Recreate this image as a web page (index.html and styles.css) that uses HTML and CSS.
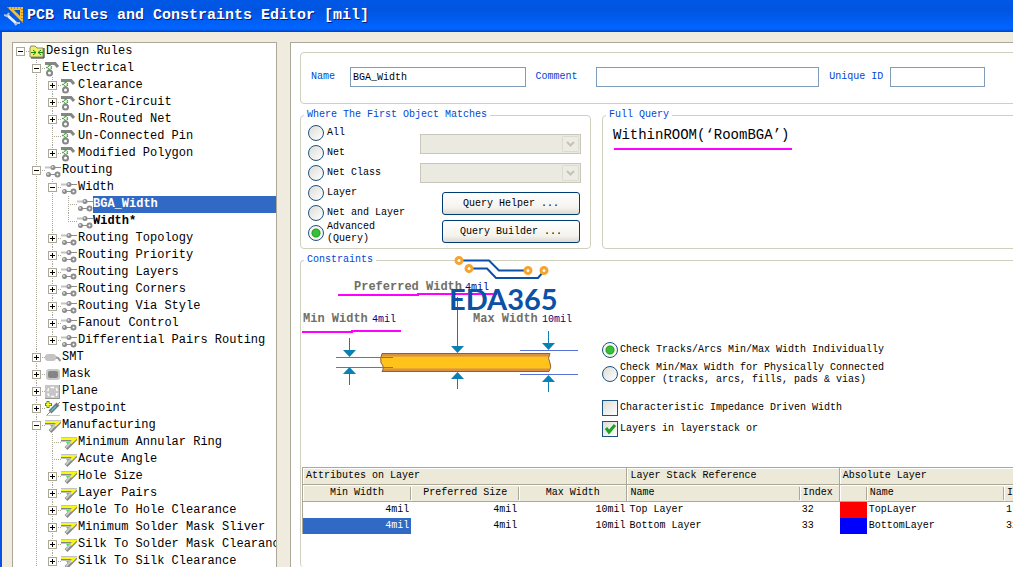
FILE: index.html
```html
<!DOCTYPE html>
<html lang="en">
<head>
    <meta charset="UTF-8">
    <meta name="viewport" content="width=device-width, initial-scale=1.0">
    <title>PCB Rules and Constraints Editor [mil]</title>
    <link rel="stylesheet" href="styles.css">
</head>
<body>

<!-- Icons shared by the tree rows -->
<svg class="sprite" aria-hidden="true">
    <symbol id="folder" viewBox="0 0 16 17">
        <path d="M1 5 L2 3 H6 L8 5 H14 V14 H1 Z" fill="#eef06a" stroke="#8a8a70"/>
        <path d="M2 15 H15 V5" fill="none" stroke="#222" stroke-width="1"/>
        <path d="M2 9.500 H7 M9 9.500 H14 M4 7 L7 9.500 L4 12 M12 7 L9 9.500 L12 12" fill="none" stroke="#138a13"/>
    </symbol>
    <symbol id="electrical" viewBox="0 0 16 17">
        <path d="M0 3.500 H10 L13 7" fill="none" stroke="#868686" stroke-width="3"/>
        <path d="M4.500 5 L7 7.500 L4.500 10 L2 7.500 Z" fill="none" stroke="#2f9a2f" stroke-width="1.500" stroke-dasharray="1.200 .8"/>
        <circle cx="4.500" cy="13" r="2.500" fill="#fff" stroke="#868686" stroke-width="2"/>
    </symbol>
    <symbol id="routing" viewBox="0 0 16 17">
        <path d="M0 5.500 H8" stroke="#c4c4c4" stroke-width="2"/>
        <path d="M8 5.500 H16 M3 12.500 H12" stroke="#8c8c8c"/>
        <circle cx="8" cy="5.500" r="2.500" fill="#8c8c8c"/>
        <circle cx="7.500" cy="5" r="1" fill="#ddd"/>
        <circle cx="3.500" cy="12.500" r="2.500" fill="#8c8c8c"/>
        <circle cx="3" cy="12" r="1" fill="#ddd"/>
        <circle cx="12.500" cy="12.500" r="2" fill="#fff" stroke="#8c8c8c" stroke-width="2"/>
    </symbol>
    <symbol id="smt" viewBox="0 0 16 17">
        <path d="M9 8 L13 9 L15.500 12" fill="none" stroke="#999" stroke-width="2"/>
        <rect x="0" y="5" width="11" height="7" rx="3" fill="#c4c4c4"/>
    </symbol>
    <symbol id="mask" viewBox="0 0 16 17">
        <rect x="1" y="3" width="14" height="11" rx="3" fill="#c8c8c8"/>
        <rect x="3" y="5" width="10" height="7" rx="2" fill="#858585"/>
    </symbol>
    <symbol id="plane" viewBox="0 0 16 17">
        <rect x="0" y="2" width="15" height="14" fill="#c6c6c6"/>
        <path d="M0 15.500 H14.500 V2" fill="none" stroke="#999"/>
        <rect x="3" y="4.500" width="9" height="9" rx="3" fill="none" stroke="#fff" stroke-width="1.500" stroke-dasharray="3 2"/>
    </symbol>
    <symbol id="testpoint" viewBox="0 0 16 17">
        <path d="M3 1 V8 M0 4.500 H7" stroke="#3a9a1a" stroke-width="3"/>
        <path d="M3 2 V7 M1 4.500 H6" stroke="#ffff30" stroke-width="1.500"/>
        <path d="M2 15 L5 12 M12 5 L15 2" stroke="#888"/>
        <path d="M5 12 L13 4" stroke="#777" stroke-width="4"/>
        <path d="M6 11 L11 6" stroke="#35d0d0" stroke-width="1.500"/>
        <path d="M1 15.500 H15" stroke="#c8c8c8"/>
    </symbol>
    <symbol id="mfg" viewBox="0 0 16 17">
        <path d="M0 5.500 H14 L5 14.500" fill="none" stroke="#868686" stroke-width="4"/>
        <path d="M5 8 H9 L7 11 Z" fill="#55dd55"/>
        <path d="M1 5 H13 L5 13.500" fill="none" stroke="#c8c8c8" stroke-width="2"/>
        <path d="M0 5 H14 L10 9" fill="none" stroke="#f8f812" stroke-width="2"/>
    </symbol>
</svg>

<header class="titlebar">
    <svg class="app-icon" viewBox="0 0 20 20" aria-hidden="true">
        <path d="M3 1 H19 V17 Z M10 4 L16 10 V4 Z" fill="#f7bd2b" fill-rule="evenodd"/>
        <path d="M4 2 H18 V16" fill="none" stroke="#8a5a10" stroke-dasharray="1 2"/>
        <path d="M3 9 L13 18" stroke="#e8edf5" stroke-width="3"/>
        <path d="M0 9 L3 10 L5 7 M11 19 L13 17 L16 17" fill="none" stroke="#b9c2cf" stroke-width="2"/>
    </svg>
    <h1>PCB Rules and Constraints Editor [mil]</h1>
</header>

<main class="window">
    <nav class="tree" aria-label="Design rules">
        <ul>
            <li>
                <div class="row"><span class="twig"><button class="minus" aria-label="Collapse"></button></span><svg><use href="#folder"/></svg><span class="label">Design Rules</span></div>
                <ul>
                    <li>
                        <div class="row"><span class="twig"><button class="minus" aria-label="Collapse"></button></span><svg><use href="#electrical"/></svg><span class="label">Electrical</span></div>
                        <ul>
                            <li><div class="row"><span class="twig"><button class="plus" aria-label="Expand"></button></span><svg><use href="#electrical"/></svg><span class="label">Clearance</span></div></li>
                            <li><div class="row"><span class="twig"><button class="plus" aria-label="Expand"></button></span><svg><use href="#electrical"/></svg><span class="label">Short-Circuit</span></div></li>
                            <li><div class="row"><span class="twig"><button class="plus" aria-label="Expand"></button></span><svg><use href="#electrical"/></svg><span class="label">Un-Routed Net</span></div></li>
                            <li><div class="row"><span class="twig"></span><svg><use href="#electrical"/></svg><span class="label">Un-Connected Pin</span></div></li>
                            <li><div class="row"><span class="twig"><button class="plus" aria-label="Expand"></button></span><svg><use href="#electrical"/></svg><span class="label">Modified Polygon</span></div></li>
                        </ul>
                    </li>
                    <li>
                        <div class="row"><span class="twig"><button class="minus" aria-label="Collapse"></button></span><svg><use href="#routing"/></svg><span class="label">Routing</span></div>
                        <ul>
                            <li>
                                <div class="row"><span class="twig"><button class="minus" aria-label="Collapse"></button></span><svg><use href="#routing"/></svg><span class="label">Width</span></div>
                                <ul>
                                    <li><div class="row"><span class="twig"></span><svg><use href="#routing"/></svg><span class="label rule selected">BGA_Width</span></div></li>
                                    <li><div class="row"><span class="twig"></span><svg><use href="#routing"/></svg><span class="label rule">Width*</span></div></li>
                                </ul>
                            </li>
                            <li><div class="row"><span class="twig"><button class="plus" aria-label="Expand"></button></span><svg><use href="#routing"/></svg><span class="label">Routing Topology</span></div></li>
                            <li><div class="row"><span class="twig"><button class="plus" aria-label="Expand"></button></span><svg><use href="#routing"/></svg><span class="label">Routing Priority</span></div></li>
                            <li><div class="row"><span class="twig"><button class="plus" aria-label="Expand"></button></span><svg><use href="#routing"/></svg><span class="label">Routing Layers</span></div></li>
                            <li><div class="row"><span class="twig"><button class="plus" aria-label="Expand"></button></span><svg><use href="#routing"/></svg><span class="label">Routing Corners</span></div></li>
                            <li><div class="row"><span class="twig"><button class="plus" aria-label="Expand"></button></span><svg><use href="#routing"/></svg><span class="label">Routing Via Style</span></div></li>
                            <li><div class="row"><span class="twig"><button class="plus" aria-label="Expand"></button></span><svg><use href="#routing"/></svg><span class="label">Fanout Control</span></div></li>
                            <li><div class="row"><span class="twig"><button class="plus" aria-label="Expand"></button></span><svg><use href="#routing"/></svg><span class="label">Differential Pairs Routing</span></div></li>
                        </ul>
                    </li>
                    <li><div class="row"><span class="twig"><button class="plus" aria-label="Expand"></button></span><svg><use href="#smt"/></svg><span class="label">SMT</span></div></li>
                    <li><div class="row"><span class="twig"><button class="plus" aria-label="Expand"></button></span><svg><use href="#mask"/></svg><span class="label">Mask</span></div></li>
                    <li><div class="row"><span class="twig"><button class="plus" aria-label="Expand"></button></span><svg><use href="#plane"/></svg><span class="label">Plane</span></div></li>
                    <li><div class="row"><span class="twig"><button class="plus" aria-label="Expand"></button></span><svg><use href="#testpoint"/></svg><span class="label">Testpoint</span></div></li>
                    <li class="more">
                        <div class="row"><span class="twig"><button class="minus" aria-label="Collapse"></button></span><svg><use href="#mfg"/></svg><span class="label">Manufacturing</span></div>
                        <ul>
                            <li><div class="row"><span class="twig"></span><svg><use href="#mfg"/></svg><span class="label">Minimum Annular Ring</span></div></li>
                            <li><div class="row"><span class="twig"></span><svg><use href="#mfg"/></svg><span class="label">Acute Angle</span></div></li>
                            <li><div class="row"><span class="twig"><button class="plus" aria-label="Expand"></button></span><svg><use href="#mfg"/></svg><span class="label">Hole Size</span></div></li>
                            <li><div class="row"><span class="twig"><button class="plus" aria-label="Expand"></button></span><svg><use href="#mfg"/></svg><span class="label">Layer Pairs</span></div></li>
                            <li><div class="row"><span class="twig"><button class="plus" aria-label="Expand"></button></span><svg><use href="#mfg"/></svg><span class="label">Hole To Hole Clearance</span></div></li>
                            <li><div class="row"><span class="twig"><button class="plus" aria-label="Expand"></button></span><svg><use href="#mfg"/></svg><span class="label">Minimum Solder Mask Sliver</span></div></li>
                            <li><div class="row"><span class="twig"><button class="plus" aria-label="Expand"></button></span><svg><use href="#mfg"/></svg><span class="label">Silk To Solder Mask Clearance</span></div></li>
                            <li><div class="row"><span class="twig"><button class="plus" aria-label="Expand"></button></span><svg><use href="#mfg"/></svg><span class="label">Silk To Silk Clearance</span></div></li>
                        </ul>
                    </li>
                </ul>
            </li>
        </ul>
    </nav>

    <section class="editor">
        <div class="group identity">
            <label for="ruleName">Name</label>
            <input type="text" id="ruleName" class="name" value="BGA_Width">
            <label for="comment">Comment</label>
            <input type="text" id="comment" class="comment">
            <label for="uniqueId">Unique ID</label>
            <input type="text" id="uniqueId" class="uid">
        </div>

        <div class="scope">
            <fieldset class="group matches">
                <legend>Where The First Object Matches</legend>
                <div class="matches-body">
                    <div class="choices">
                        <label><input type="radio" name="match">All</label>
                        <label><input type="radio" name="match">Net</label>
                        <label><input type="radio" name="match">Net Class</label>
                        <label><input type="radio" name="match">Layer</label>
                        <label><input type="radio" name="match">Net and Layer</label>
                        <label><input type="radio" name="match" checked>Advanced (Query)</label>
                    </div>
                    <div class="pickers">
                        <select disabled aria-label="Net"></select>
                        <select disabled aria-label="Layer"></select>
                        <button type="button">Query Helper ...</button>
                        <button type="button">Query Builder ...</button>
                    </div>
                </div>
            </fieldset>

            <fieldset class="group query">
                <legend>Full Query</legend>
                <textarea aria-label="Full Query" rows="1" spellcheck="false">WithinROOM(‘RoomBGA’)</textarea>
                <div class="marker"></div>
            </fieldset>
        </div>

        <fieldset class="group constraints">
            <legend>Constraints</legend>
            <div class="constraints-body">
                <div class="diagram">
                    <svg class="drawing" viewBox="0 0 300 190">
                        <text class="caption" x="53" y="24">Preferred Width</text>
                        <text class="value" x="164" y="24">4mil</text>
                        <text class="caption" x="2" y="56">Min Width</text>
                        <text class="value" x="71" y="56">4mil</text>
                        <text class="caption" x="172" y="56">Max Width</text>
                        <text class="value" x="241" y="56">10mil</text>
                        <path class="mark" d="M37 29 H117 V28 H196 M1 66 H51 V65 H100"/>
                        <!-- copper track -->
                        <path d="M81 87.500 H249 Q246 92 249 97 Q251 101 248 105.500 H81 Q84 101 80 97 Q79 92 81 87.500 Z" fill="#ffc31b"/>
                        <path d="M81 89 H248 M82 104 H248" stroke="#d99048" stroke-width="3"/>
                        <path d="M81 87.500 H249 Q246 92 249 97 Q251 101 248 105.500 H81 Q84 101 80 97 Q79 92 81 87.500 Z" fill="none" stroke="#8f5f35"/>
                        <path class="limit" d="M35 91.500 H92 M35 101.500 H92 M219 84.500 H277 M219 108.500 H277"/>
                        <path class="stem" d="M48.500 72 V88 M48.500 104 V119 M156.500 31 V84 M156.500 109 V123 M247.500 65 V81 M247.500 112 V126"/>
                        <path class="head" d="M42 84 H55 L48.500 91 Z M42 108 H55 L48.500 101 Z M150 80 H163 L156.500 87 Z M150 113 H163 L156.500 106 Z M241 77 H254 L247.500 84 Z M241 116 H254 L247.500 109 Z"/>
                    </svg>
                    <svg class="logo" viewBox="0 0 114 60">
                        <path d="M10 6.500 H40 L50 16.500 H79 M20 14.500 H38 L47 24 H89 L95 17" fill="none" stroke="#0b51a5" stroke-width="2"/>
                        <g fill="#fff" stroke="#f5a431" stroke-width="3">
                            <circle cx="10" cy="6.500" r="3"/>
                            <circle cx="20" cy="14.500" r="3"/>
                            <circle cx="79" cy="16.500" r="3"/>
                            <circle cx="95" cy="16.500" r="3"/>
                        </g>
                        <text x="0" y="56">EDA365</text>
                    </svg>
                </div>
                <div class="options">
                    <label><input type="radio" name="check" checked>Check Tracks/Arcs Min/Max Width Individually</label>
                    <label><input type="radio" name="check"><span>Check Min/Max Width for Physically Connected<br>Copper (tracks, arcs, fills, pads &amp; vias)</span></label>
                    <label class="box"><input type="checkbox">Characteristic Impedance Driven Width</label>
                    <label class="box"><input type="checkbox" checked>Layers in layerstack or</label>
                </div>
            </div>

            <table class="layers">
                <colgroup>
                    <col class="w-attr"><col class="w-attr"><col class="w-attr">
                    <col class="w-name"><col class="w-index">
                    <col class="w-color"><col class="w-abs"><col class="w-index">
                </colgroup>
                <thead>
                    <tr class="bands">
                        <th colspan="3">Attributes on Layer</th>
                        <th colspan="2">Layer Stack Reference</th>
                        <th colspan="3">Absolute Layer</th>
                    </tr>
                    <tr class="heads">
                        <th class="mid">Min Width</th>
                        <th class="mid">Preferred Size</th>
                        <th class="mid end">Max Width</th>
                        <th>Name</th>
                        <th class="end">Index</th>
                        <th></th>
                        <th>Name</th>
                        <th>Index</th>
                    </tr>
                </thead>
                <tbody>
                    <tr>
                        <td class="num">4mil</td><td class="num">4mil</td><td class="num">10mil</td>
                        <td>Top Layer</td><td>32</td>
                        <td class="red"></td><td>TopLayer</td><td>1</td>
                    </tr>
                    <tr>
                        <td class="num active">4mil</td><td class="num">4mil</td><td class="num">10mil</td>
                        <td>Bottom Layer</td><td>33</td>
                        <td class="blue"></td><td>BottomLayer</td><td>32</td>
                    </tr>
                </tbody>
            </table>
        </fieldset>
    </section>
</main>

</body>
</html>
```
FILE: styles.css
```css
* {
    box-sizing: border-box;
}

body {
    margin: 0;
    height: 100vh;
    display: flex;
    flex-direction: column;
    overflow: hidden;
    font-family: "Liberation Mono", monospace;
    font-size: 10px;
    line-height: 12px;
    color: #000;
    background: #efebde;
}

input, button, select, textarea {
    font: inherit;
    color: inherit;
    margin: 0;
}

.sprite {
    display: none;
}

/* Title bar */
.titlebar {
    flex: none;
    display: flex;
    align-items: center;
    gap: 3px;
    height: 32px;
    padding: 0 4px;
    background: linear-gradient(to bottom, #0058e6 0%, #0055e0 30%, #0061fa 75%, #0066ff 90%, #0040c8 100%);
}

.titlebar h1 {
    margin: 0;
    font-size: 15px;
    line-height: 20px;
    color: #fff;
    text-shadow: 1px 1px 0 #0a1883;
    white-space: nowrap;
}

.app-icon {
    width: 20px;
    height: 20px;
}

.window {
    flex: 1;
    min-height: 0;
    display: flex;
    gap: 13px;
    padding: 10px 0 0 10px;
    border-left: 2px solid #0a50e6;
}

/* Rule tree */
.tree {
    flex: none;
    width: 265px;
    overflow: hidden;
    background: #fff;
    border: 1px solid #aca899;
    border-bottom: none;
    font-size: 12px;
}

.tree ul {
    list-style: none;
    margin: 0;
    padding: 0;
}

.tree ul ul {
    padding-left: 16px;
}

.tree ul ul > li {
    background: repeating-linear-gradient(#aca899 0 1px, transparent 1px 2px) 7px 0 / 1px 100% no-repeat;
}

.tree ul ul > li:last-child {
    background-size: 1px 9px;
}

.tree ul ul > li.more {
    background-size: 1px 100%;
}

.row {
    display: flex;
    height: 17px;
    line-height: 17px;
    white-space: nowrap;
}

.row svg {
    flex: none;
    width: 16px;
    height: 17px;
}

.twig {
    flex: none;
    width: 16px;
    padding: 4px 0 0 3px;
    background: repeating-linear-gradient(to right, #aca899 0 1px, transparent 1px 2px) 7px 8px / 9px 1px no-repeat;
}

.twig button {
    display: block;
    width: 9px;
    height: 9px;
    padding: 0;
    border: 1px solid #aca899;
    background: linear-gradient(#000, #000) center / 5px 1px no-repeat, #fff;
}

.twig .plus {
    background: linear-gradient(#000, #000) center / 5px 1px no-repeat, linear-gradient(#000, #000) center / 1px 5px no-repeat, #fff;
}

.label {
    flex: 1;
    padding-left: 1px;
}

.rule {
    padding-left: 0;
    font-weight: bold;
}

.selected {
    color: #fff;
    background: #316ac5;
}

/* Rule editor */
.editor {
    flex: 1;
    min-width: 0;
    overflow: hidden;
    display: flex;
    flex-direction: column;
    padding: 9px 0 0 9px;
    background: #fff;
    border: solid #aca899;
    border-width: 1px 0 0 1px;
}

.group {
    min-width: 0;
    margin: 0;
    padding: 0;
    border: 1px solid #d0d0bf;
    border-radius: 4px;
}

legend {
    margin-left: 3px;
    padding: 0 3px;
    color: #0046d5;
}

/* The form runs on past the right edge of the window */
.identity, .query, .constraints {
    margin-right: -8px;
}

.identity {
    display: flex;
    align-items: center;
    height: 52px;
    padding: 0 35px 2px 10px;
    color: #0046d5;
    white-space: nowrap;
}

.identity input {
    height: 20px;
    padding: 0 2px;
    border: 1px solid #7f9db9;
    background: #fff;
    color: #000;
}

.identity label {
    margin-right: 15px;
}

.identity label[for="comment"] {
    margin-right: 18px;
}

.identity label[for="uniqueId"] {
    margin-right: 7px;
}

.identity input + label {
    margin-left: 10px;
}

.name {
    flex: 176 1 0;
    min-width: 0;
}

.comment {
    flex: 226 1 0;
    min-width: 0;
}

.uid {
    flex: 92 1 0;
    min-width: 0;
}

.scope {
    display: flex;
    gap: 11px;
    margin-top: 5px;
}

.matches {
    flex: none;
    width: 291px;
}

.matches-body {
    display: flex;
    justify-content: space-between;
    padding: 8px 9px 5px 7px;
    margin-top: -6px;
}

.choices label {
    display: flex;
    align-items: center;
    gap: 3px;
    height: 20px;
}

.pickers {
    display: flex;
    flex-direction: column;
    align-items: flex-end;
    padding-top: 11px;
}

.pickers select {
    width: 161px;
    height: 20px;
    margin-bottom: 9px;
    border: 1px solid #c9c7ba;
    border-radius: 0;
    appearance: none;
    opacity: 1;
    background:
        url("data:image/svg+xml,%3Csvg xmlns='http://www.w3.org/2000/svg' width='17' height='16'%3E%3Crect x='.5' y='.5' width='16' height='15' rx='1' fill='%23ecebe4' stroke='%23dcdbd0'/%3E%3Cpath d='M5 6l3.500 3.500L12 6' fill='none' stroke='%23c4c3b8' stroke-width='2'/%3E%3C/svg%3E") right 1px center no-repeat,
        #ebeae1;
}

.pickers button {
    width: 138px;
    height: 23px;
    margin: 0 1px 5px 0;
    padding: 0;
    border: 1px solid #003c74;
    border-radius: 3px;
    background: linear-gradient(#fff, #f4f3ee 70%, #dcd9cf);
}

.pickers button:last-child {
    margin-bottom: 0;
}

/* Radios and tick boxes */
input[type="radio"], input[type="checkbox"] {
    appearance: none;
    flex: none;
    width: 16px;
    height: 16px;
    border: 1px solid #1c5180;
    background: linear-gradient(135deg, #dcdcd7, #fff);
}

input[type="radio"] {
    border-radius: 50%;
}

input[type="radio"]:checked {
    background: radial-gradient(circle, #35c035 0 3px, #22a022 4px, #f6f6f4 5px);
}

input[type="checkbox"]:checked {
    background: url("data:image/svg+xml,%3Csvg xmlns='http://www.w3.org/2000/svg' width='14' height='14'%3E%3Cpath d='M3 6l3 4 6-7' fill='none' stroke='%2321a121' stroke-width='3'/%3E%3C/svg%3E") center no-repeat, linear-gradient(135deg, #dcdcd7, #fff);
}

.query {
    flex: 1;
}

.query textarea {
    display: block;
    width: 100%;
    height: 20px;
    padding: 0 10px;
    border: none;
    outline: none;
    resize: none;
    overflow: hidden;
    background: none;
    font-size: 14px;
    line-height: 20px;
    margin-top: 4px;
}

.marker {
    width: 178px;
    height: 2px;
    margin: 3px 0 0 11px;
    background: #f0f;
}

/* Constraints */
.constraints {
    flex: 1;
    margin-top: 5px;
    border-bottom: none;
}

.constraints-body {
    display: flex;
    height: 201px;
    gap: 1px;
}

.diagram {
    flex: none;
    position: relative;
    width: 300px;
}

.drawing {
    display: block;
    width: 300px;
    height: 190px;
}

.caption {
    font-size: 12px;
    font-weight: bold;
    fill: #716f64;
}

.value {
    font-size: 10px;
    fill: #000080;
}

.mark {
    fill: none;
    stroke: #f0f;
    stroke-width: 2;
}

.limit {
    stroke: #5a72d8;
}

.stem {
    stroke: #0a80b5;
}

.head {
    fill: #0a80b5;
}

/* Logo lies over the group border and the diagram */
.logo {
    position: absolute;
    left: 148px;
    top: -12px;
    width: 114px;
    height: 60px;
}

.logo text {
    font-family: Lato, sans-serif;
    font-size: 29px;
    font-weight: bold;
    fill: #0b51a5;
}

.options {
    padding-top: 76px;
}

.options label {
    display: flex;
    align-items: center;
    gap: 2px;
    margin-bottom: 4px;
    white-space: nowrap;
}

.options label + label {
    margin-bottom: 14px;
}

.options label + .box {
    margin-bottom: 5px;
}

/* Layer table */
.layers {
    width: 742px;
    margin-left: 1px;
    table-layout: fixed;
    border-collapse: separate;
    border-spacing: 0;
    border: solid #aca899;
    border-width: 1px 0 0 1px;
}

.w-attr {
    width: 108px;
}

.w-name {
    width: 172px;
}

.w-index {
    width: 40px;
}

.w-color {
    width: 27px;
}

.w-abs {
    width: 137px;
}

.layers th {
    height: 17px;
    padding: 0 3px;
    font-weight: normal;
    text-align: left;
    background: #ece9d8;
    border-bottom: 1px solid #aca899;
    box-shadow: inset 1px 1px 0 #fff;
    overflow: hidden;
    white-space: nowrap;
}

.layers .bands th, .layers .end {
    border-right: 1px solid #aca899;
}

.layers .heads th:not(.end) {
    background: linear-gradient(#aca899, #aca899) right center / 1px 13px no-repeat, #ece9d8;
}

.layers .heads .mid {
    text-align: center;
}

.layers td {
    height: 16px;
    padding: 0 2px;
    white-space: nowrap;
}

.layers .num {
    text-align: right;
}

.layers .active {
    color: #fff;
    background: #316ac5;
}

.layers .red {
    background: #f00;
}

.layers .blue {
    background: #00f;
}
```
